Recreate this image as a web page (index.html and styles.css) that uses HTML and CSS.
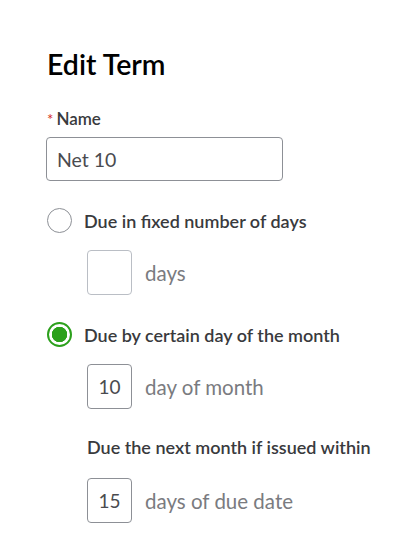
FILE: index.html
```html
<!DOCTYPE html>
<html lang="en">
<head>
    <meta charset="UTF-8">
    <meta name="viewport" content="width=device-width, initial-scale=1.0">
    <title>Edit Term</title>
    <link rel="stylesheet" href="styles.css">
</head>
<body>
    <div class="panel">
        <h2>Edit Term</h2>

        <label class="field-label" for="name"><span class="req">*</span>Name</label>
        <input class="text-input" type="text" id="name" value="Net 10">

        <label class="radio-row">
            <span class="radio"></span>
            <span class="radio-text">Due in fixed number of days</span>
        </label>
        <div class="num-row">
            <input class="num-box empty" type="text" value="">
            <span class="unit">days</span>
        </div>

        <label class="radio-row">
            <span class="radio checked"></span>
            <span class="radio-text">Due by certain day of the month</span>
        </label>
        <div class="num-row">
            <input class="num-box" type="text" value="10">
            <span class="unit">day of month</span>
        </div>

        <div class="sub-label">Due the next month if issued within</div>
        <div class="num-row">
            <input class="num-box" type="text" value="15">
            <span class="unit">days of due date</span>
        </div>
    </div>
</body>
</html>
```

FILE: styles.css
```css
body {
    font-family: Lato, "Open Sans", sans-serif;
    background-color: #fff;
    margin: 0;
    padding: 0;
    color: #393a3d;
}
.panel {
    padding: 48px 0 0 47px;
}
h2 {
    margin: 0 0 29px 0;
    font-size: 28.5px;
    font-weight: 600;
    color: #000;
    line-height: 32px;
}
.field-label {
    display: block;
    font-size: 17px;
    font-weight: 600;
    line-height: 20px;
    margin-bottom: 8px;
}
.req {
    color: #d52b1e;
    margin-right: 3px;
    font-weight: 400;
    font-size: 15px;
}
.text-input {
    display: block;
    width: 237px;
    height: 44px;
    margin: 0 0 0 -1px;
    padding: 0 10px;
    box-sizing: border-box;
    border: 1px solid #8d9096;
    border-radius: 4px;
    font-family: inherit;
    font-size: 19.5px;
    color: #4a4b4f;
}
.radio-row {
    display: flex;
    align-items: center;
    gap: 12px;
    margin-top: 27px;
}
.radio {
    width: 25px;
    height: 25px;
    box-sizing: border-box;
    border: 1px solid #8d9096;
    border-radius: 50%;
    flex: none;
}
.radio.checked {
    border: 2px solid #2ca01c;
    background: radial-gradient(circle, #2ca01c 0 7.5px, #fff 8px);
}
.radio-text,
.sub-label {
    font-size: 18px;
    font-weight: 600;
    line-height: 22px;
}
.num-row {
    display: flex;
    align-items: center;
    gap: 13px;
    margin: 17px 0 0 40px;
}
.num-box {
    width: 45px;
    height: 45px;
    box-sizing: border-box;
    border: 1px solid #8d9096;
    border-radius: 4px;
    text-align: center;
    font-family: inherit;
    font-size: 19px;
    color: #4a4b4f;
    padding: 0;
}
.num-box.empty {
    border-color: #babec5;
}
.unit {
    font-size: 20.5px;
    color: #7a7b80;
}
.sub-label {
    margin: 27px 0 0 40px;
}
.sub-label + .num-row {
    margin-top: 20px;
}
```
